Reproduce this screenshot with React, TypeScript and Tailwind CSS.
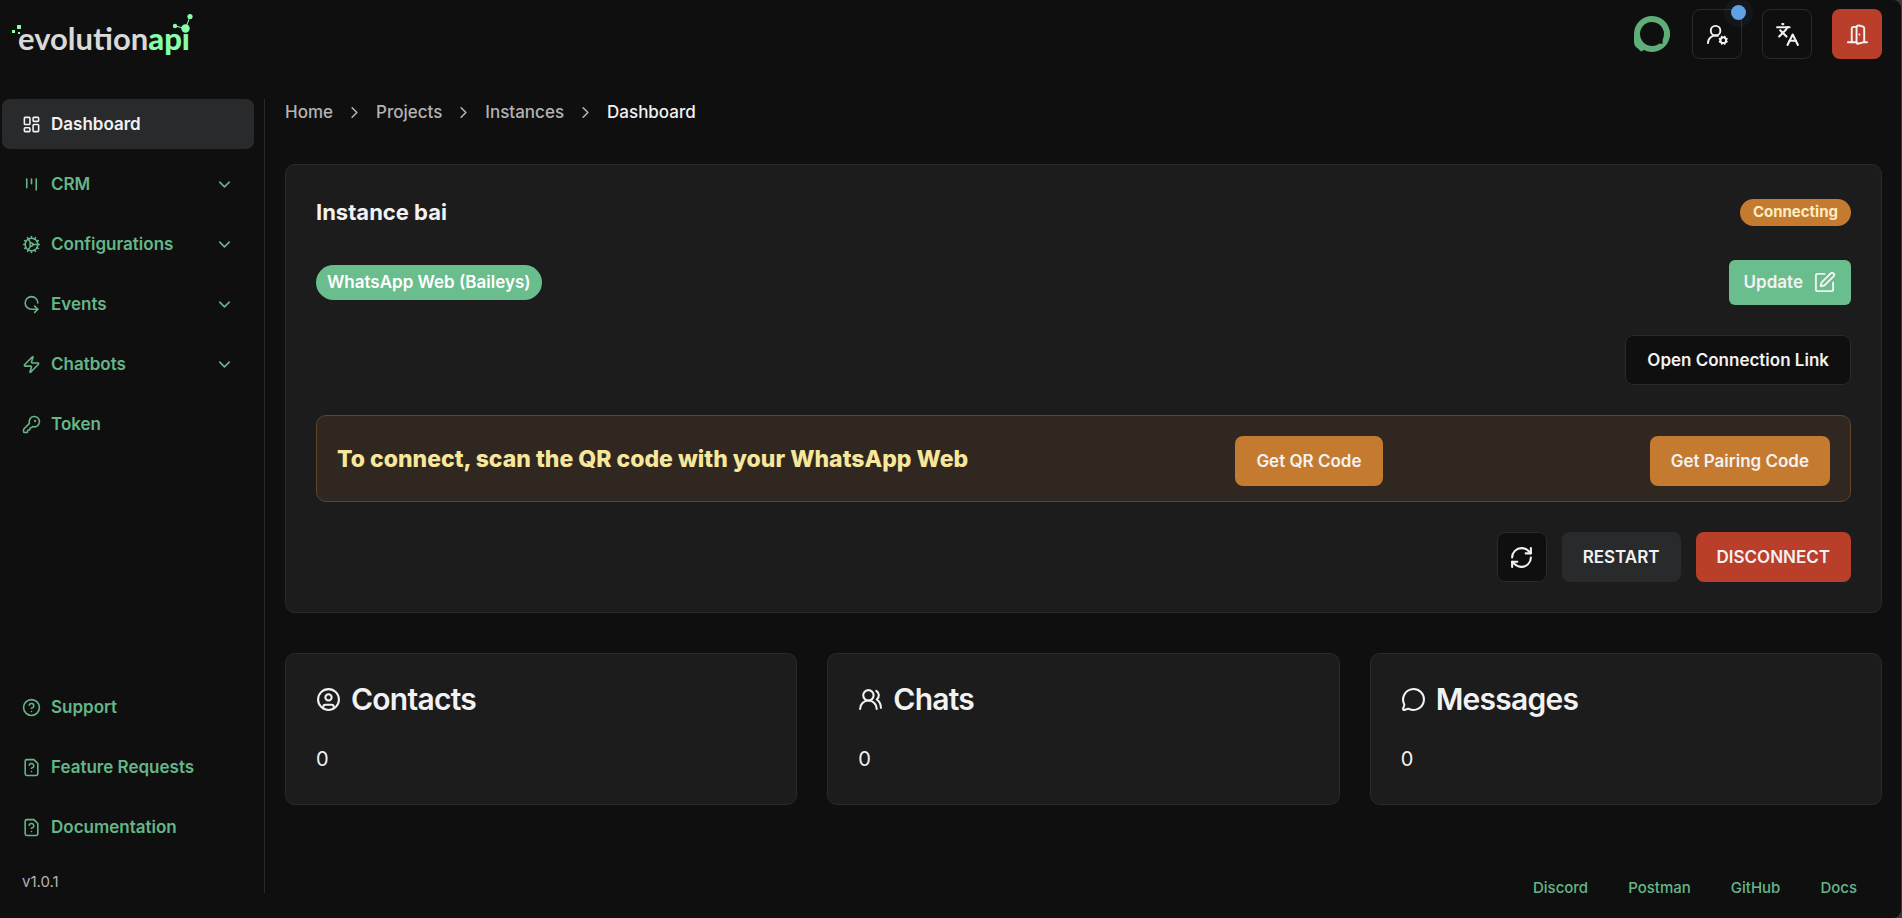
import { ReactNode } from "react";
import {
    ChevronDown,
    ChevronRight,
    CircleHelp,
    CircleUser,
    Cog,
    DoorOpen,
    IterationCcw,
    KeyRound,
    Languages,
    LayoutDashboard,
    LucideIcon,
    MessageCircle,
    RefreshCw,
    SquarePen,
    UserRoundCog,
    UsersRound,
    Zap,
} from "lucide-react";

interface NavItem {
    title: string;
    icon: ReactNode;
    active?: boolean;
    expandable?: boolean;
}

interface StatCardProps {
    title: string;
    icon: LucideIcon;
    value: number;
}

const navIcon = "size-[19px] shrink-0";
const iconButton = "relative flex size-[50px] items-center justify-center rounded-lg";
const textButton = "h-[50px] rounded-lg px-[21px] pt-0.5 text-[17px] font-semibold";

const KanbanIcon = () => (
    <svg viewBox="0 0 24 24" className={navIcon} fill="none" stroke="currentColor" strokeWidth="2" strokeLinecap="round">
        <path d="M6 5v11" />
        <path d="M12 5v6" />
        <path d="M18 5v14" />
    </svg>
);

const FileHelpIcon = () => (
    <svg viewBox="0 0 24 24" className={navIcon} fill="none" stroke="currentColor" strokeWidth="2" strokeLinecap="round" strokeLinejoin="round">
        <path d="M15 2H6a2 2 0 0 0-2 2v16a2 2 0 0 0 2 2h12a2 2 0 0 0 2-2V7z" />
        <path d="M9.1 9a3 3 0 0 1 5.82 1c0 2-3 3-3 3" />
        <path d="M12 17h.01" />
    </svg>
);

const mainItems: NavItem[] = [
    { title: "Dashboard", icon: <LayoutDashboard className={navIcon} />, active: true },
    { title: "CRM", icon: <KanbanIcon />, expandable: true },
    { title: "Configurations", icon: <Cog className={navIcon} />, expandable: true },
    { title: "Events", icon: <IterationCcw className={navIcon} />, expandable: true },
    { title: "Chatbots", icon: <Zap className={navIcon} />, expandable: true },
    { title: "Token", icon: <KeyRound className={navIcon} /> },
];

const helpItems: NavItem[] = [
    { title: "Support", icon: <CircleHelp className={navIcon} /> },
    { title: "Feature Requests", icon: <FileHelpIcon /> },
    { title: "Documentation", icon: <FileHelpIcon /> },
];

const stats: StatCardProps[] = [
    { title: "Contacts", icon: CircleUser, value: 0 },
    { title: "Chats", icon: UsersRound, value: 0 },
    { title: "Messages", icon: MessageCircle, value: 0 },
];

const parents = ["Home", "Projects", "Instances"];
const footerLinks = ["Discord", "Postman", "GitHub", "Docs"];

function Logo() {
    return (
        <svg viewBox="0 0 184 42" className="h-[42px] w-[184px] overflow-visible" role="img" aria-label="evolutionapi">
            <text x="6" y="37" fontFamily="Lato, sans-serif" fontSize="31" fontWeight="700" fill="#d9d9d9">
                evolution
                <tspan fill="#87ffa9" fontWeight="900">api</tspan>
            </text>
            <g fill="#87ffa9">
                <rect x="0" y="17" width="3" height="3" />
                <rect x="5" y="12" width="4" height="4" />
                <rect x="6" y="19" width="2" height="2" />
                <circle cx="163" cy="13" r="2.2" />
                <circle cx="178" cy="3.5" r="2.6" />
                <circle cx="173.5" cy="15.5" r="4.2" />
            </g>
            <path d="M163 13l10.5 2.5L178 3.5" stroke="#87ffa9" fill="none" />
        </svg>
    );
}

function Avatar() {
    return (
        <span className="flex size-10 items-center justify-center">
            <svg viewBox="0 0 36 36" className="size-9" aria-hidden="true">
                <path
                    fill="#5fae7a"
                    fillRule="evenodd"
                    d="M18 0a18 18 0 1 1-8 34.1L7 35.5 4.5 33C1.5 31 0 29 0 26V18A18 18 0 0 1 18 0zM18 6a12 12 0 1 0 7.5 21.4L28.5 28 28.7 23.4A12 12 0 0 0 18 6z"
                />
            </svg>
        </span>
    );
}

function SidebarItem({ item }: { item: NavItem }) {
    const color = item.active ? "bg-[#292a2c] text-[#f2f2f2]" : "text-[#65b688]";
    return (
        <li>
            <button className={`flex h-[50px] w-full items-center gap-[10px] rounded-lg px-5 text-[17px] font-semibold ${color}`}>
                {item.icon}
                <span className="pt-0.5">{item.title}</span>
                {item.expandable && <ChevronDown className="ml-auto size-[19px]" />}
            </button>
        </li>
    );
}

function StatCard({ title, icon: Icon, value }: StatCardProps) {
    return (
        <div className="rounded-[10px] border border-[#2a2a2a] bg-[#1c1c1c] p-[30px]">
            <h3 className="flex items-center gap-[10px] text-[30px] leading-[30px] font-semibold tracking-tight">
                <Icon className="size-[25px]" />
                {title}
            </h3>
            <p className="mt-[30px] text-[20px] leading-[30px]">{value}</p>
        </div>
    );
}

export default function App() {
    return (
        <div className="bg-[#3a3a3a] pr-px">
            <div className="flex min-h-screen flex-col rounded-r-lg bg-[#0f0f0f] pb-[25px] font-['Inter',sans-serif] text-[#f2f2f2]">
                {/* Header */}
                <header className="flex items-center justify-between pt-[9px] pr-[19px] pl-3">
                    <a href="#">
                        <Logo />
                    </a>
                    <div className="flex items-center gap-5">
                        <Avatar />
                        <button aria-label="Profile" className={`${iconButton} border border-[#2a2a2a]`}>
                            <UserRoundCog className="size-[23px]" />
                            <span className="absolute -top-3 -right-3 size-[29px] rounded-full bg-[#60a5e8]/5" />
                            <span className="absolute -top-[5px] -right-[5px] size-[15px] rounded-full bg-[#5fa0e2]" />
                        </button>
                        <button aria-label="Language" className={`${iconButton} border border-[#2a2a2a]`}>
                            <Languages className="size-[25px]" />
                        </button>
                        <button aria-label="Logout" className={`${iconButton} bg-[#b93f2b]`}>
                            <DoorOpen className="size-[23px]" />
                        </button>
                    </div>
                </header>

                <div className="mt-10 flex flex-1">
                    {/* Sidebar */}
                    <nav className="flex w-[265px] shrink-0 flex-col border-r border-[#2a2a2a] pr-[10px] pl-[2px]">
                        <ul className="flex flex-col gap-[10px]">
                            {mainItems.map((item) => (
                                <SidebarItem key={item.title} item={item} />
                            ))}
                        </ul>
                        <ul className="mt-auto flex flex-col gap-[10px]">
                            {helpItems.map((item) => (
                                <SidebarItem key={item.title} item={item} />
                            ))}
                        </ul>
                        <span className="mt-5 mb-px pl-5 text-[15px] leading-5 text-[#b3b3b3]">v1.0.1</span>
                    </nav>

                    <main className="flex flex-1 flex-col pr-[19px] pl-5">
                        <nav aria-label="Breadcrumb" className="flex h-[27px] items-center gap-3 text-[17px] font-medium text-[#b3b3b3]">
                            {parents.map((name) => (
                                <span key={name} className="flex items-center gap-3">
                                    <a href="#">{name}</a>
                                    <ChevronRight className="size-[19px]" />
                                </span>
                            ))}
                            <span className="text-[#f2f2f2]">Dashboard</span>
                        </nav>

                        {/* Instance card */}
                        <section className="mt-[38px] rounded-[10px] border border-[#2a2a2a] bg-[#1c1c1c] p-[30px]">
                            <div className="flex h-[35px] items-center justify-between">
                                <h2 className="text-[22px] font-bold">Instance bai</h2>
                                <span className="flex h-[27px] items-center rounded-full bg-[#c47b30] px-[13px] text-[15px] font-bold text-[#fdedc4]">
                                    Connecting
                                </span>
                            </div>
                            <div className="mt-[30px] flex h-[45px] items-center justify-between">
                                <span className="flex h-[35px] items-center rounded-full bg-[#6abd8c] px-[11px] text-[17px] font-semibold text-white">
                                    WhatsApp Web (Baileys)
                                </span>
                                <button className="flex h-[45px] items-center gap-[10px] rounded-md bg-[#6abd8c] px-[15px] text-[17px] font-semibold">
                                    Update
                                    <SquarePen className="size-[23px]" />
                                </button>
                            </div>
                            <div className="mt-[30px] flex justify-end">
                                <button className={`${textButton} border border-[#2a2a2a] bg-[#0f0f0f]`}>Open Connection Link</button>
                            </div>
                            <div className="mt-[30px] flex items-center justify-between rounded-[10px] border border-[#5f4526] bg-[#302820] px-5 pt-5 pb-[15px]">
                                <h4 className="mb-1 text-[23px] font-extrabold text-[#f6e79c]">To connect, scan the QR code with your WhatsApp Web</h4>
                                <button className={`${textButton} bg-[#c47b30]`}>Get QR Code</button>
                                <button className={`${textButton} bg-[#c47b30]`}>Get Pairing Code</button>
                            </div>
                            <div className="mt-[30px] flex justify-end gap-[15px]">
                                <button aria-label="Refresh" className={`${iconButton} border border-[#2a2a2a] bg-[#0f0f0f]`}>
                                    <RefreshCw className="size-[25px]" />
                                </button>
                                <button className={`${textButton} bg-[#292a2c]`}>RESTART</button>
                                <button className={`${textButton} bg-[#b93f2b]`}>DISCONNECT</button>
                            </div>
                        </section>

                        {/* Stats */}
                        <section className="mt-10 grid grid-cols-3 gap-[30px]">
                            {stats.map((stat) => (
                                <StatCard key={stat.title} {...stat} />
                            ))}
                        </section>

                        <footer className="mt-auto flex justify-end gap-10 pr-[25px] text-[15px] leading-[10px] font-medium text-[#65b688]">
                            {footerLinks.map((link) => (
                                <a key={link} href="#">
                                    {link}
                                </a>
                            ))}
                        </footer>
                    </main>
                </div>
            </div>
        </div>
    );
}
